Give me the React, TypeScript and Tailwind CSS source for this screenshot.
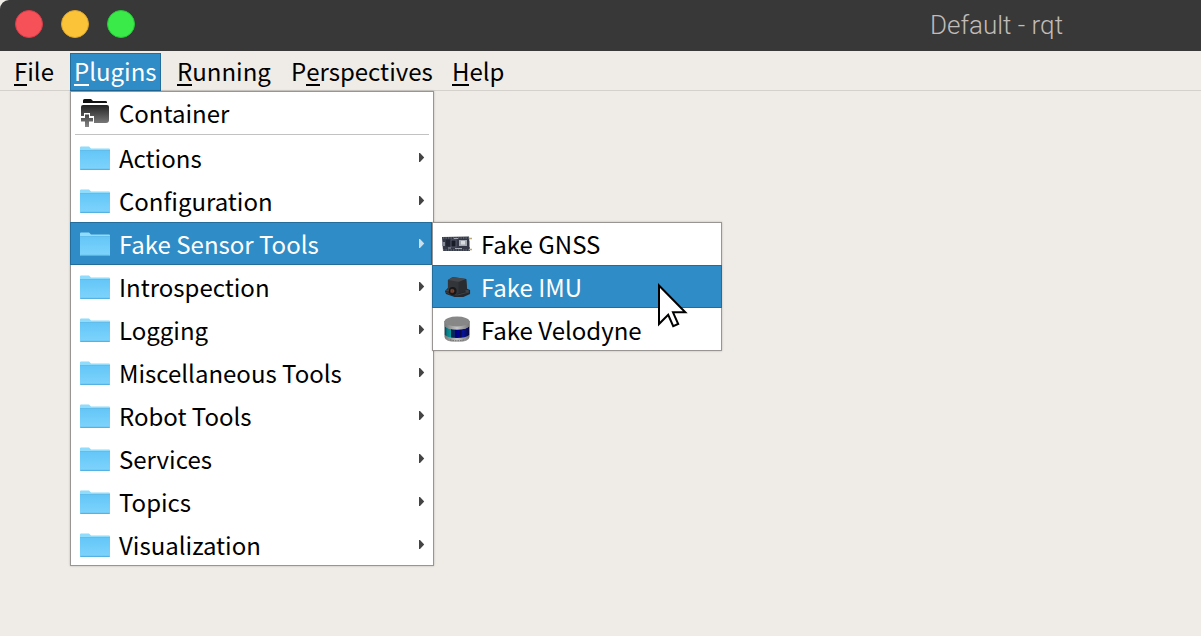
import React from "react";

function FolderIcon() {
  return (
    <svg width="30" height="24" viewBox="0 0 30 24" className="mt-px block shrink-0">
      <defs>
        <linearGradient id="folder-front" x1="0" y1="0" x2="0" y2="1">
          <stop offset="0" stopColor="#64c6f7" />
          <stop offset="1" stopColor="#7ed4fc" />
        </linearGradient>
      </defs>
      <path d="M0 1.5Q0 .5 1 .5H9L11 2.5H29Q30 2.5 30 3.5V8H0Z" fill="#8fdcfc" />
      <path d="M0 4.5H30V23Q30 24 29 24H1Q0 24 0 23Z" fill="url(#folder-front)" />
      <path d="M0 4.5H30" stroke="#60bdec" strokeWidth="1" />
      <path d="M.3 23.4H29.7" stroke="#55b2e3" strokeWidth="1.2" />
    </svg>
  );
}

function ContainerIcon() {
  return (
    <svg width="30" height="30" viewBox="0 0 30 30" className="block shrink-0">
      <defs>
        <linearGradient id="container-front" x1="0" y1="0" x2="0" y2="1">
          <stop offset="0" stopColor="#222" />
          <stop offset="1" stopColor="#777" />
        </linearGradient>
        <linearGradient id="plus" x1="0" y1="0" x2="0" y2="1">
          <stop offset="0" stopColor="#444" />
          <stop offset="1" stopColor="#888" />
        </linearGradient>
      </defs>
      <path d="M3 4V2.5Q3 1 4.500 1H11L13 3H25.500Q27 3 27 4V5H3Z" fill="#111" />
      <path d="M1 9Q1 7 3 7H27Q29 7 29 9V22Q29 25 26 25H1Z" fill="url(#container-front)" />
      <path d="M0 18H4V15H10V18H14V25H10V30H4V25H0Z" fill="#fff" />
      <path d="M5 16.500H9V20H13V23.500H9V29H5V23.500H1V20H5Z" fill="url(#plus)" />
    </svg>
  );
}

function GnssIcon() {
  return (
    <svg width="30" height="16" viewBox="0 0 30 16" className="block">
      <path d="M0 1L27 .5L28 15L1 15Z" fill="#343846" />
      <path d="M1 2H27M1 14H27" stroke="#777d8a" strokeWidth="1" strokeDasharray="1.300 1.200" />
      <rect x="0" y="6" width="3" height="4" fill="#858995" />
      <rect x="4" y="3.500" width="5" height="7" fill="#222633" />
      <rect x="9" y="4" width="5" height="7" fill="#171b25" stroke="#55596a" />
      <rect x="17" y="4" width="8" height="6" fill="#a4a8b0" />
      <rect x="19" y="5" width="4" height="3.500" fill="#dadcdf" />
      <path d="M12 2.500H16M13 12.500H20M6 12H9" stroke="#a2a6b0" />
      <path d="M27 2.500H30M27 13.500H30" stroke="#bda96c" strokeWidth="1.500" />
      <path d="M27.500 5V11" stroke="#9a9da5" />
    </svg>
  );
}

function ImuIcon() {
  return (
    <svg width="26" height="21" viewBox="0 0 27 21" preserveAspectRatio="none" className="mt-px ml-[2px] block">
      <path d="M0 14L3 11H21L26 13V17L19 20L10 20L1 17Z" fill="#24272b" />
      <path d="M3 3L8 0L22 2L23 13L12 17L3 14Z" fill="#32353a" />
      <path d="M3 3L8 0L22 2L15 5Z" fill="#44474c" />
      <path d="M14 5L22 2L23 13L14 17Z" fill="#292c31" />
      <path d="M1 15L5 17L13 18L25 15" stroke="#3d4045" fill="none" />
      <ellipse cx="3" cy="13.500" rx="2" ry="1" fill="#42454b" />
      <ellipse cx="23" cy="14" rx="2" ry="1" fill="#42454b" />
      <circle cx="8" cy="14" r="4" fill="#171719" />
      <circle cx="7.500" cy="14" r="2.200" fill="#653827" />
      <path d="M7 12.500V15M9 13V15" stroke="#9a5632" strokeWidth=".6" />
    </svg>
  );
}

function VelodyneIcon() {
  return (
    <svg width="26" height="27" viewBox="0 0 26 27" className="block">
      <defs>
        <linearGradient id="lens">
          <stop offset="0" stopColor="#073c58" />
          <stop offset=".09" stopColor="#087d86" />
          <stop offset=".25" stopColor="#079b9f" />
          <stop offset=".27" stopColor="#062447" />
          <stop offset=".4" stopColor="#052766" />
          <stop offset=".43" stopColor="#01016f" />
          <stop offset=".6" stopColor="#0000a0" />
          <stop offset=".64" stopColor="#080840" />
          <stop offset=".74" stopColor="#0712a3" />
          <stop offset="1" stopColor="#080838" />
        </linearGradient>
        <linearGradient id="metal">
          <stop offset="0" stopColor="#777" />
          <stop offset=".5" stopColor="#c5c5c5" />
          <stop offset="1" stopColor="#777" />
        </linearGradient>
      </defs>
      <path d="M.5 5V21Q1 26 13 26Q25 26 25.500 21V5Z" fill="url(#metal)" />
      <path d="M.8 10Q3 13.500 13 13.500Q23 13.500 25.200 10V19Q22 22 13 22Q4 22 .8 19Z" fill="url(#lens)" />
      <path d="M.5 5V10Q3 13.500 13 13.500Q23 13.500 25.500 10V5Z" fill="url(#metal)" />
      <ellipse cx="13" cy="5.500" rx="12.500" ry="5" fill="#878787" />
      <path d="M6 24Q13 25.500 20 24" stroke="#666" strokeDasharray="1.500 1" fill="none" />
    </svg>
  );
}

function Arrow({ active }: { active?: boolean }) {
  return (
    <svg width="6" height="9" viewBox="0 0 6 9" className={active ? "block text-[#c8dfed]" : "block text-[#444]"}>
      <path d="M0 0H1L5.200 4.500L1 9H0Z" fill="currentColor" />
    </svg>
  );
}

const categories = [
  { label: "Actions" },
  { label: "Configuration" },
  { label: "Fake Sensor Tools", active: true },
  { label: "Introspection" },
  { label: "Logging" },
  { label: "Miscellaneous Tools" },
  { label: "Robot Tools" },
  { label: "Services" },
  { label: "Topics" },
  { label: "Visualization" },
];

const sensors = [
  { label: "Fake GNSS", icon: <GnssIcon /> },
  { label: "Fake IMU", icon: <ImuIcon />, active: true },
  { label: "Fake Velodyne", icon: <VelodyneIcon /> },
];

function Mnemonic({ before = "", letter, after }: { before?: string; letter: string; after: string }) {
  return (
    <span className="block h-[38px] leading-[35px]">
      {before}
      <span className="inline-block h-[33px] border-b-2 border-current align-top">{letter}</span>
      {after}
    </span>
  );
}

export default function App() {
  return (
    <div className="h-[636px] w-[1201px] overflow-hidden bg-[#efebe7] font-['Noto_Sans_CJK_SC','Noto_Sans',sans-serif] text-[24px] text-black">
      <header className="flex h-[51px] items-center justify-between rounded-tl-[9px] bg-[#383838] pr-[138px] pb-[3px] pl-[15px]">
        <div className="flex gap-[18px]">
          <div className="size-7 rounded-full border border-[#d83d49] bg-[#f65058]" />
          <div className="size-7 rounded-full border border-[#dca52a] bg-[#fbc438]" />
          <div className="size-7 rounded-full border border-[#26c638] bg-[#3aea49]" />
        </div>
        <h1 className="pt-[2px] font-[Roboto] text-[26px] leading-[30px] font-light whitespace-nowrap text-[#c0bcb9]">Default - rqt</h1>
      </header>
      <nav className="relative flex h-10 border-b border-[#d4d0cc] pt-[2px] whitespace-nowrap">
        <div className="w-[70px] pl-[14px]"><Mnemonic letter="F" after="ile" /></div>
        <div className="h-[38px] w-[91px] border border-[#236d9d] bg-[#308cc6] pl-[3px] text-white">
          <div className="-mt-px"><Mnemonic letter="P" after="lugins" /></div>
        </div>
        <div className="w-[130px] pl-4"><Mnemonic letter="R" after="unning" /></div>
        <div className="w-[161px]"><Mnemonic before="P" letter="e" after="rspectives" /></div>
        <div><Mnemonic letter="H" after="elp" /></div>

        <div className="absolute top-10 left-[70px] h-[475px] w-[364px] border border-[#989592] bg-white shadow-[0_0_2px_rgba(0,0,0,0.22)]">
          <div className="flex h-[42px] items-center gap-[9px] pl-[9px]">
            <ContainerIcon />
            <span className="leading-[42px]">Container</span>
          </div>
          <div className="mx-1 mb-px h-px bg-[#c2c2c2]" />
          {categories.map((item) => (
            <div
              key={item.label}
              className={
                item.active
                  ? "-ml-px flex h-[43px] w-[362px] items-center border border-[#236d9d] bg-[#308cc6] pr-[6px] pl-[9px] text-white"
                  : "flex h-[43px] items-center pr-[8px] pl-[9px]"
              }
            >
              <FolderIcon />
              <span className="ml-[9px] flex-1 leading-[41px]">{item.label}</span>
              <Arrow active={item.active} />
            </div>
          ))}
        </div>

        <div className="absolute top-[171px] left-[432px] h-[129px] w-[290px] border border-[#989592] bg-white shadow-[0_0_2px_rgba(0,0,0,0.22)]">
          {sensors.map((item) => (
            <div
              key={item.label}
              className={
                item.active
                  ? "-mx-px flex h-[43px] items-center border border-[#236d9d] bg-[#308cc6] pl-[9px] text-white"
                  : "flex h-[42px] items-center pl-[9px] first:[&>span:last-child]:-mt-[2px]"
              }
            >
              <span className="flex w-[30px] justify-center">{item.icon}</span>
              <span className="ml-[9px] leading-[41px]">{item.label}</span>
            </div>
          ))}
        </div>

        <svg width="32" height="47" viewBox="0 0 32 47" className="absolute top-[231px] left-[657px]">
          <path d="M2 3.500V42L11.200 32.800L16.200 44.200L21.200 42L16 30.300H28.300Z" fill="#fff" stroke="#000" strokeWidth="2" strokeLinejoin="miter" />
        </svg>
      </nav>
    </div>
  );
}
